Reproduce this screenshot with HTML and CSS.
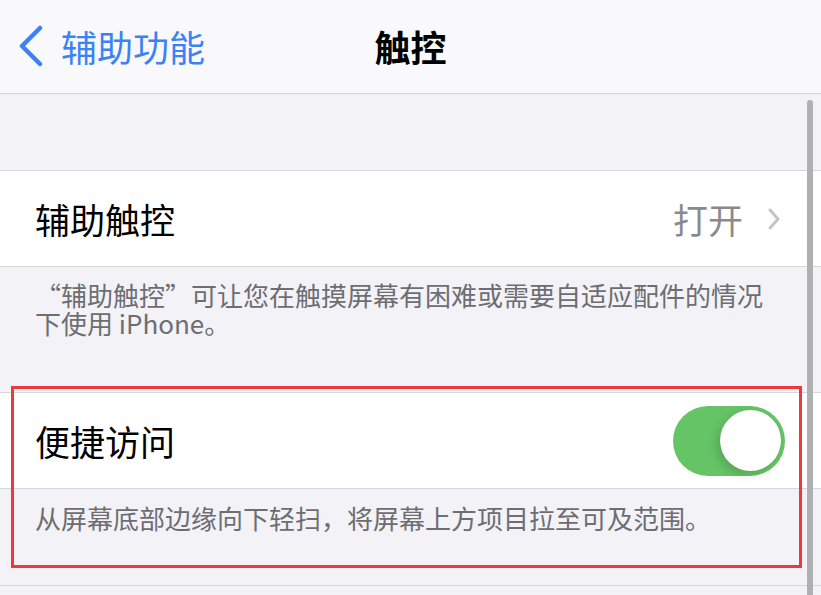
FILE: index.html
```html
<!DOCTYPE html>
<html lang="zh-CN">
<head>
    <meta charset="UTF-8">
    <meta name="viewport" content="width=device-width, initial-scale=1.0">
    <title>触控</title>
    <link rel="stylesheet" href="styles.css">
</head>
<body>
    <header class="nav-bar">
        <a class="back-link" href="#">
            <svg class="back-icon" viewBox="0 0 26 42" fill="none" stroke="#3a82f6" stroke-width="4.5" stroke-linecap="round" stroke-linejoin="round">
                <polyline points="22,3 4,21 22,39"/>
            </svg>
            <span>辅助功能</span>
        </a>
        <h1 class="nav-title">触控</h1>
        <div></div>
    </header>

    <main class="settings">
        <div class="group-spacer"></div>

        <div class="cell">
            <span class="cell-label">辅助触控</span>
            <span class="cell-value">
                打开
                <svg class="disclosure" viewBox="0 0 14 24" fill="none" stroke="#c4c4c7" stroke-width="3" stroke-linecap="round" stroke-linejoin="round">
                    <polyline points="3,3 11,12 3,21"/>
                </svg>
            </span>
        </div>
        <p class="group-footer footer-tall">“辅助触控”可让您在触摸屏幕有困难或需要自适应配件的情况下使用 iPhone。</p>

        <div class="cell">
            <span class="cell-label">便捷访问</span>
            <span class="switch on"><span class="knob"></span></span>
        </div>
        <p class="group-footer footer-short">从屏幕底部边缘向下轻扫，将屏幕上方项目拉至可及范围。</p>
    </main>

    <!-- Highlight around the reachability group -->
    <div class="highlight-box"></div>
    <div class="scroll-indicator"></div>
</body>
</html>
```

FILE: styles.css
```css
* {
    margin: 0;
    padding: 0;
    box-sizing: border-box;
}

body {
    font-family: "Noto Sans CJK SC", "Noto Sans", sans-serif;
    background: #f2f2f7;
    width: 821px;
    height: 595px;
    overflow: hidden;
    position: relative;
}

.nav-bar {
    height: 94px;
    background: #f9f9fb;
    border-bottom: 1px solid #d4d4d8;
    display: grid;
    grid-template-columns: 1fr auto 1fr;
    align-items: center;
    padding-bottom: 2px;
}

.back-link {
    display: flex;
    align-items: center;
    gap: 17px;
    padding-left: 18px;
    color: #3a82f6;
    text-decoration: none;
    font-size: 36px;
    line-height: 1;
}

.back-icon {
    width: 26px;
    height: 42px;
}

.nav-title {
    font-size: 36px;
    font-weight: 700;
    color: #000;
    line-height: 1;
}

.group-spacer {
    height: 76px;
}

.cell {
    height: 97px;
    background: #fff;
    border-top: 1px solid #d8d8dc;
    border-bottom: 1px solid #d8d8dc;
    display: flex;
    align-items: center;
    justify-content: space-between;
    padding: 0 36px 0 35px;
}

.cell-label {
    font-size: 35px;
    color: #000;
    line-height: 1;
}

.cell-value {
    display: flex;
    align-items: center;
    gap: 24px;
    font-size: 35px;
    color: #8a8a8e;
    line-height: 1;
    margin-right: 4px;
}

.disclosure {
    width: 14px;
    height: 24px;
}

.group-footer {
    font-size: 26px;
    line-height: 28px;
    color: #6d6d72;
    padding: 14px 50px 0 35px;
}

.footer-tall {
    height: 125px;
}

.footer-short {
    height: 97px;
    padding-top: 15px;
    border-bottom: 1px solid #d8d8dc;
}

.switch {
    width: 112px;
    height: 70px;
    border-radius: 35px;
    background: #65c466;
    display: flex;
    align-items: center;
    justify-content: flex-end;
    padding: 0 4px;
}

.knob {
    width: 61px;
    height: 61px;
    border-radius: 50%;
    background: #fff;
    box-shadow: -4px 4px 10px rgba(0, 0, 0, 0.14), 0 0 1px rgba(0, 0, 0, 0.1);
}

.highlight-box {
    position: absolute;
    left: 11px;
    top: 386px;
    width: 791px;
    height: 182px;
    border: 3px solid #f0383c;
}

.scroll-indicator {
    position: absolute;
    left: 807px;
    top: 100px;
    width: 6px;
    height: 520px;
    border-radius: 3px;
    background: #b0b0b3;
}
```
